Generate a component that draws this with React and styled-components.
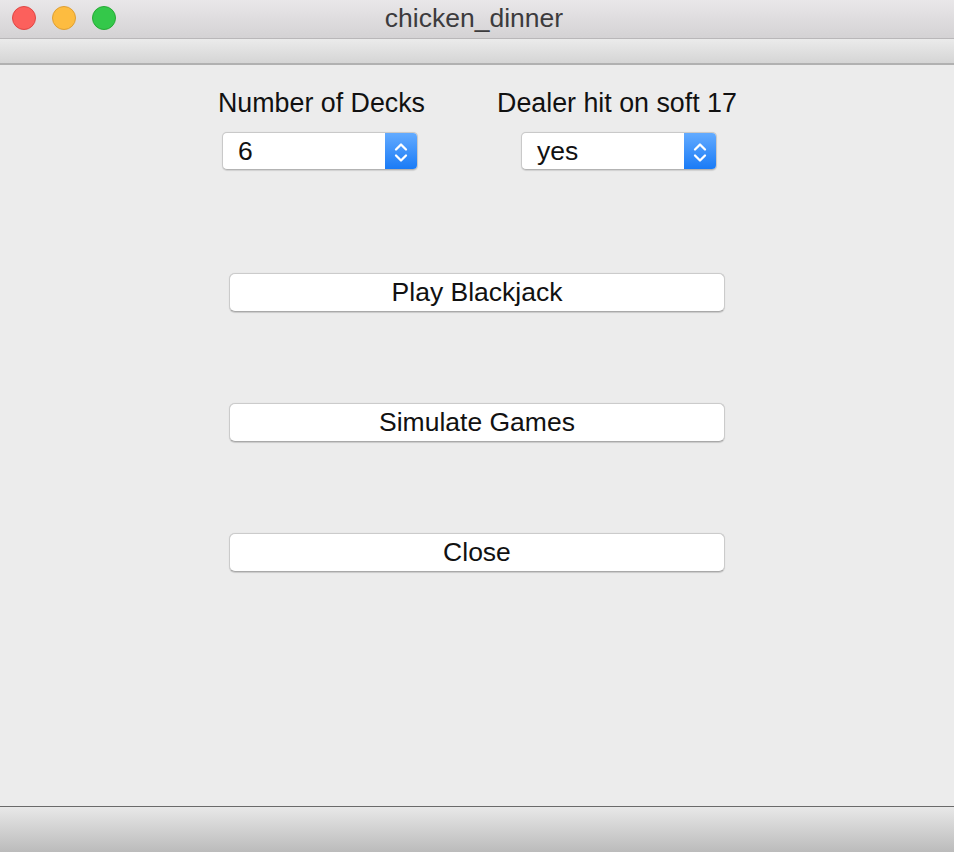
import React from "react";
import styled, { createGlobalStyle } from "styled-components";

const Global = createGlobalStyle`
  html, body { margin: 0; padding: 0; background: #ececec; }
  body { font-family: "Liberation Sans", Arial, sans-serif; }
  * { box-sizing: border-box; }
`;

const Window = styled.div`
  width: 954px;
  height: 852px;
  display: flex;
  flex-direction: column;
  background: #ececec;
  overflow: hidden;
`;

const TitleBar = styled.div`
  position: relative;
  height: 39px;
  flex: none;
  background: linear-gradient(#e9e7e9, #d4d2d4);
  border-bottom: 1px solid #b9b7b9;
  display: flex;
  align-items: center;
  justify-content: center;
`;

const Lights = styled.div`
  position: absolute;
  left: 12px;
  top: 6px;
  display: flex;
  gap: 16px;
`;

const Light = styled.span`
  width: 24px;
  height: 24px;
  border-radius: 50%;
  background: ${(p) => p.$bg};
  border: 1px solid ${(p) => p.$bd};
`;

const Title = styled.div`
  font-size: 26.5px;
  color: #3c3b3d;
  margin-top: -2px;
  padding-right: 6px;
`;

const Toolbar = styled.div`
  height: 26px;
  flex: none;
  background: linear-gradient(#ebebeb, #d5d5d5);
  border-bottom: 2px solid #b1b1b1;
`;

const Content = styled.div`
  flex: 1;
  display: flex;
  flex-direction: column;
  padding-top: 23px;
`;

const Options = styled.div`
  display: grid;
  grid-template-columns: 298px 298px;
  padding-left: 171px;
`;

const Field = styled.div`
  display: flex;
  flex-direction: column;
  align-items: center;
  gap: 14px;
`;

const Label = styled.div`
  font-size: 26.8px;
  line-height: 30px;
  color: #111;
  margin-left: ${(p) => p.$shift || 0}px;
`;

const Select = styled.div`
  width: 196px;
  height: 38px;
  display: flex;
  border-radius: 5px;
  background: #fff;
  border: 1px solid #c9c9c9;
  border-bottom-color: #b3b3b3;
  box-shadow: 0 0.5px 1px rgba(0, 0, 0, 0.12);
  overflow: hidden;
  margin-left: ${(p) => p.$shift || 0}px;
`;

const SelectValue = styled.div`
  flex: 1;
  display: flex;
  align-items: center;
  padding-left: 15px;
  font-size: 26.5px;
  color: #111;
`;

const Stepper = styled.div`
  width: 32px;
  flex: none;
  display: flex;
  align-items: center;
  justify-content: center;
  background: linear-gradient(#63abff, #1a7bf6);
`;

const Buttons = styled.div`
  display: flex;
  flex-direction: column;
  gap: 91px;
  padding-left: 229px;
  margin-top: 103px;
`;

const Button = styled.button`
  width: 496px;
  height: 39px;
  border-radius: 6px;
  background: #fff;
  border: 1px solid #cbcbcb;
  border-bottom-color: #a9a9a9;
  box-shadow: 0 0.5px 1px rgba(0, 0, 0, 0.15);
  font-family: "Liberation Sans", Arial, sans-serif;
  font-size: 26.5px;
  color: #111;
  padding: 0 0 1px;
  cursor: default;
`;

const BottomBar = styled.div`
  height: 46px;
  flex: none;
  border-top: 1px solid #6a6a6a;
  background: linear-gradient(#e8e8e8, #bbbbbb);
`;

const Chevrons = () => (
  <svg width="32" height="38" viewBox="0 0 32 38">
    <path d="M11 17.5 L16 12.5 L21 17.5" fill="none" stroke="#fff" strokeWidth="2.3" strokeLinecap="round" strokeLinejoin="round" />
    <path d="M11 23.5 L16 28.5 L21 23.5" fill="none" stroke="#fff" strokeWidth="2.3" strokeLinecap="round" strokeLinejoin="round" />
  </svg>
);

export default function App() {
  return (
    <>
      <Global />
      <Window>
        <TitleBar>
          <Lights>
            <Light $bg="#fc605c" $bd="#df4744" />
            <Light $bg="#fdbc40" $bd="#de9f34" />
            <Light $bg="#34c84a" $bd="#27aa35" />
          </Lights>
          <Title>chicken_dinner</Title>
        </TitleBar>
        <Toolbar />
        <Content>
          <Options>
            <Field>
              <Label $shift={3}>Number of Decks</Label>
              <Select>
                <SelectValue>6</SelectValue>
                <Stepper>
                  <Chevrons />
                </Stepper>
              </Select>
            </Field>
            <Field>
              <Label $shift={-2}>Dealer hit on soft 17</Label>
              <Select $shift={2}>
                <SelectValue>yes</SelectValue>
                <Stepper>
                  <Chevrons />
                </Stepper>
              </Select>
            </Field>
          </Options>
          <Buttons>
            <Button>Play Blackjack</Button>
            <Button>Simulate Games</Button>
            <Button>Close</Button>
          </Buttons>
        </Content>
        <BottomBar />
      </Window>
    </>
  );
}
